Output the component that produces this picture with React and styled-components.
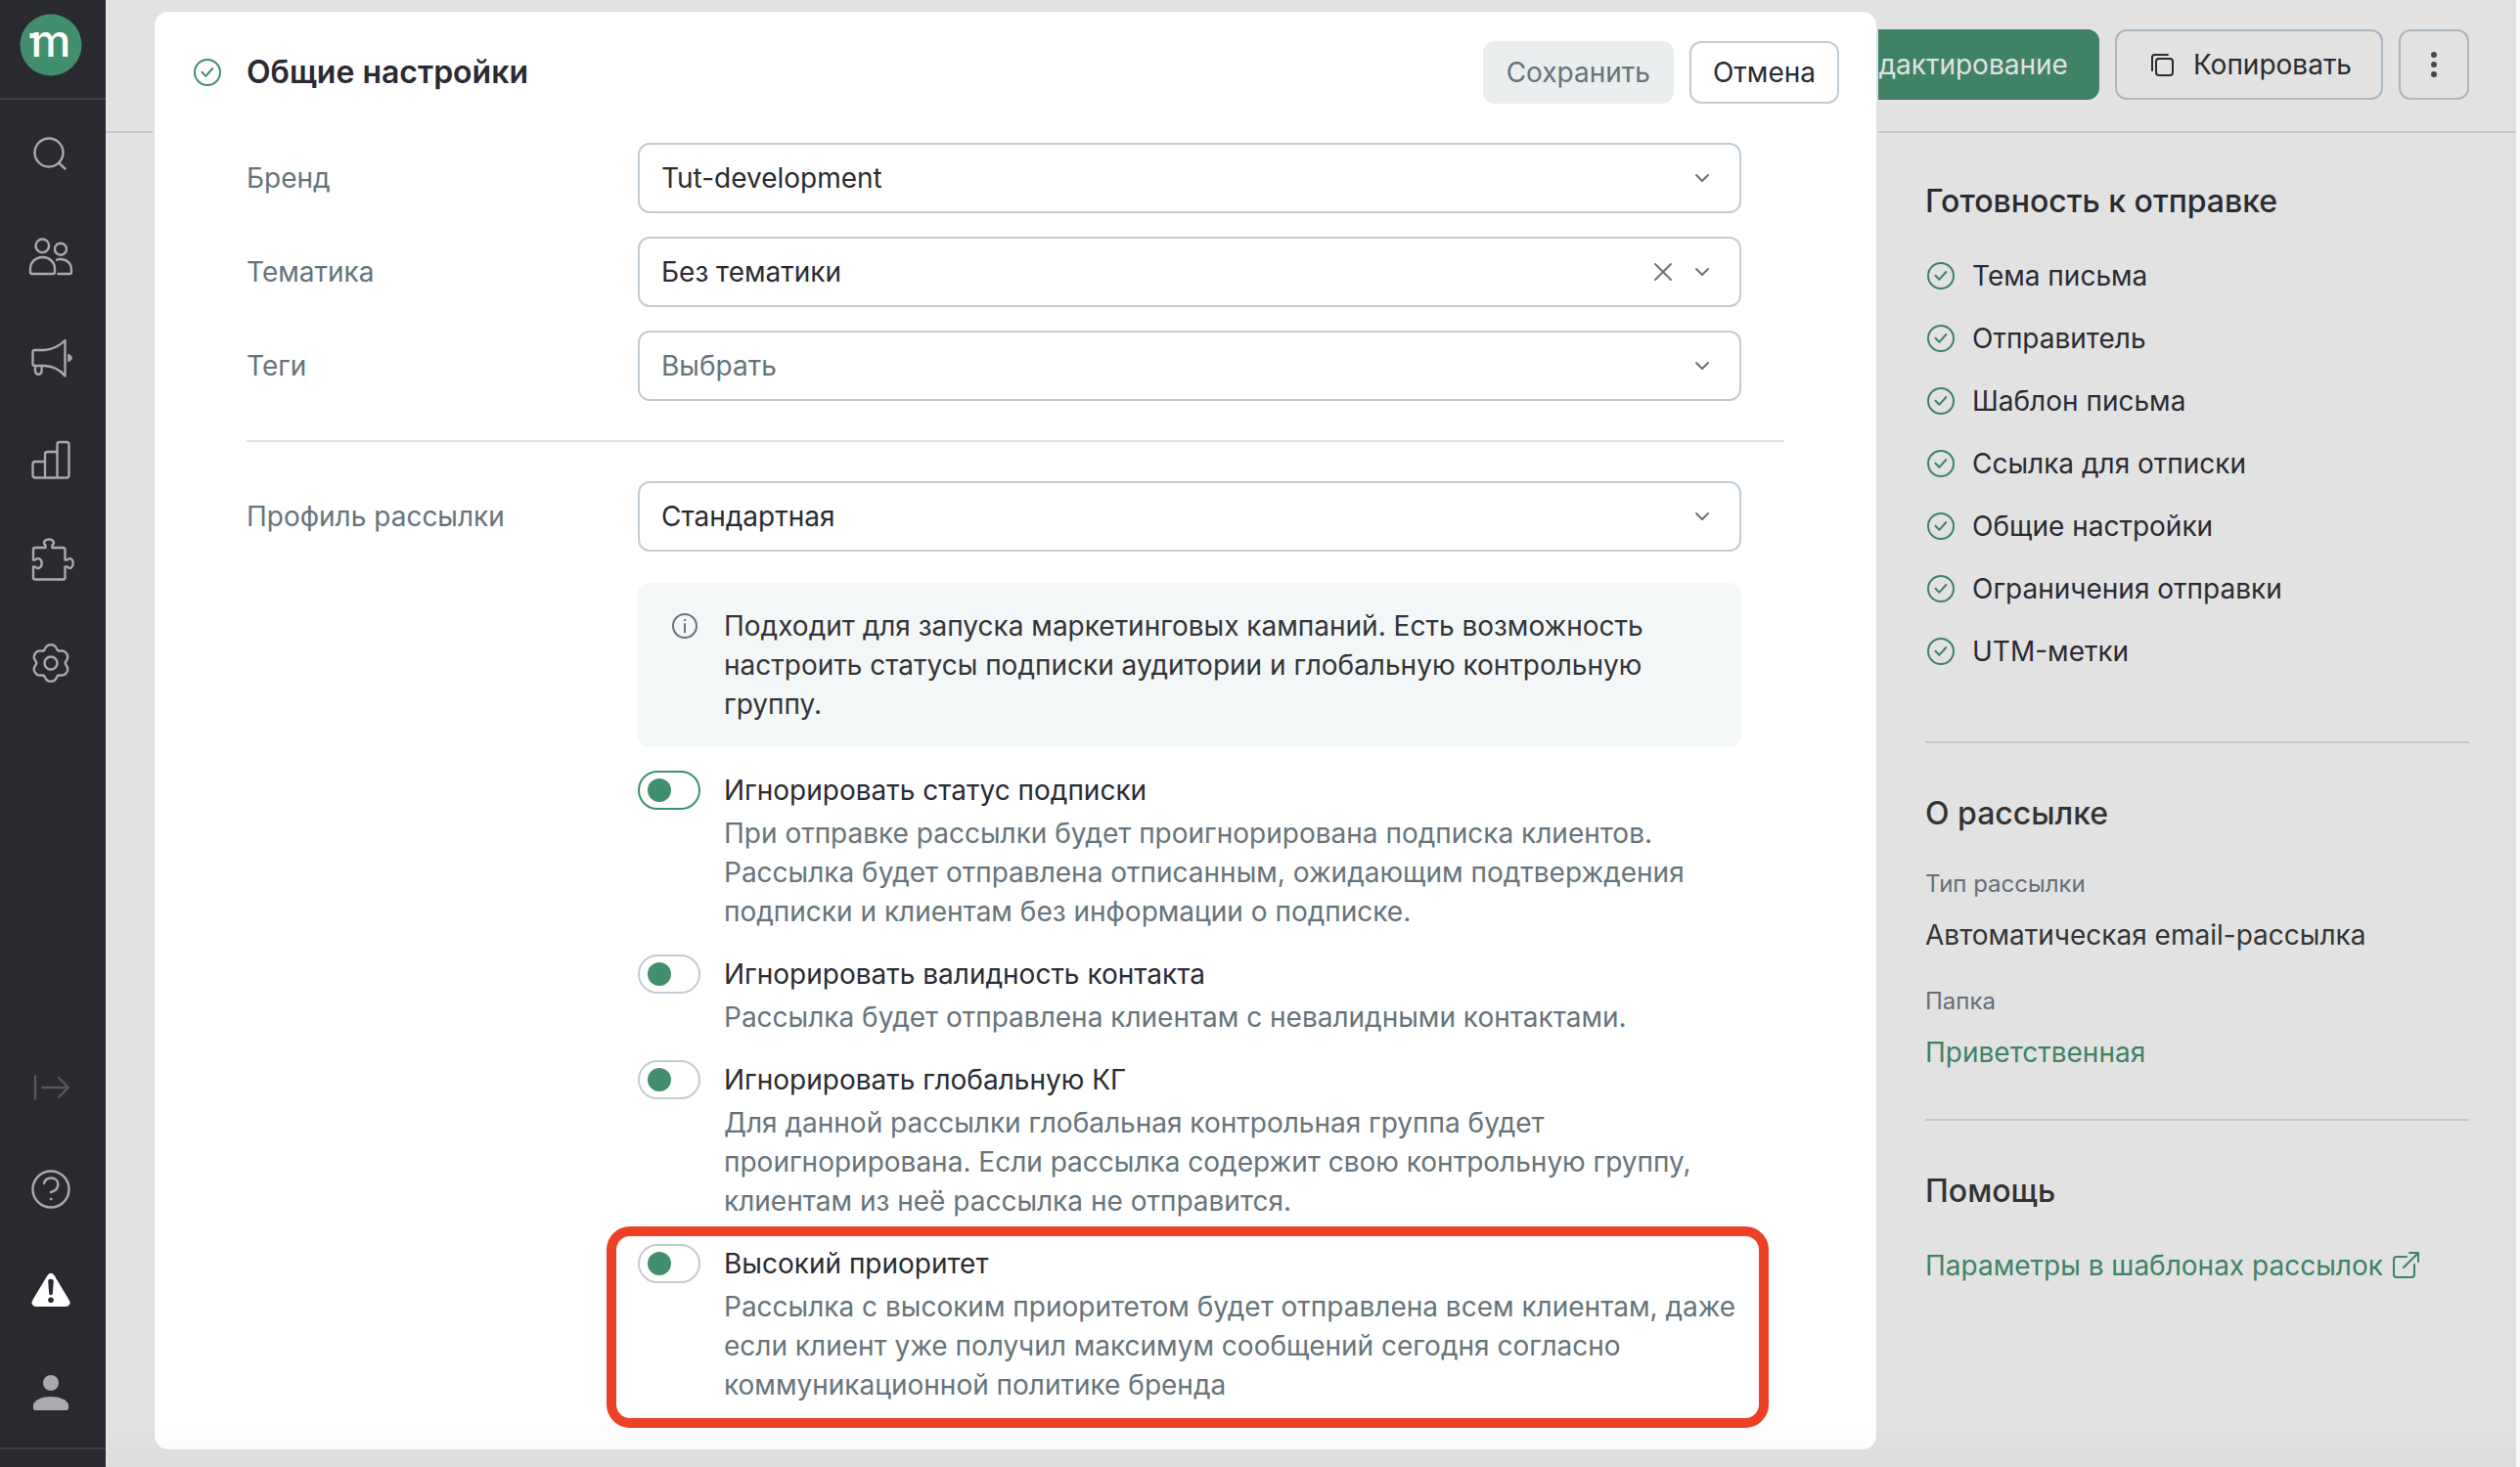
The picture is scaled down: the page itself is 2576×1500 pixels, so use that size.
import React from "react";
import styled, { createGlobalStyle, css } from "styled-components";

const color = {
  ink: "#2a2b32",
  text: "#333435",
  muted: "#66747a",
  mutedDim: "#656e75",
  line: "#dbe3e6",
  control: "#c0ccd5",
  controlDim: "#aab6c0",
  lineDim: "#c3c8cf",
  green: "#418f6e",
  greenDim: "#3f8266",
  page: "#e2e2e2",
  nav: "#292a2f",
};

const GlobalStyle = createGlobalStyle`
  *, *::before, *::after { box-sizing: border-box; }
  body {
    margin: 0;
    background: #f7f8f9;
    color: ${color.ink};
    font: 400 28px/40px Inter, "Liberation Sans", sans-serif;
  }
  button, select, input { font: inherit; color: inherit; margin: 0; }
  h1, h2, p, ul, dl, dd { margin: 0; padding: 0; }
`;

/* ---------- layout ---------- */

const Shell = styled.div`
  display: grid;
  grid-template-columns: 108px minmax(0, 1fr);
  min-height: 100vh;
  padding-right: 4px;
`;

const Sidebar = styled.nav`
  display: flex;
  flex-direction: column;
  background: ${color.nav};
`;

const LogoLink = styled.a`
  display: flex;
  align-items: center;
  height: 102px;
  padding: 0 0 8px 20px;
  border-bottom: 2px solid #3c3d42;
`;

const NavGroup = styled.div`
  display: flex;
  flex-direction: column;
  padding: 4px 4px 4px 0;
  ${(p) => p.$bottom && css`margin-top: auto;`}
`;

const NavButton = styled.button`
  display: flex;
  align-items: center;
  justify-content: center;
  height: 104px;
  padding: 0;
  border: 0;
  background: none;
  color: ${(p) => p.$tone || "#a9aaac"};
`;

const NavFooter = styled.div`
  height: 20px;
  border-top: 2px solid #3c3d42;
`;

const Main = styled.main`
  position: relative;
  display: flex;
  flex-direction: column;
  background: ${color.page};
`;

const Topbar = styled.header`
  display: flex;
  justify-content: flex-end;
  gap: 16px;
  padding: 30px 48px 32px;
  border-bottom: 2px solid ${color.lineDim};
`;

const Button = styled.button`
  display: flex;
  align-items: center;
  justify-content: center;
  gap: 16px;
  height: ${(p) => (p.$small ? 64 : 72)}px;
  padding: 0 ${(p) => (p.$small ? 22 : 30)}px;
  border: 2px solid ${color.control};
  border-radius: 12px;
  background: none;
  color: ${color.ink};
  ${(p) => p.$dim && css`border-color: ${color.controlDim};`}
  ${(p) => p.$primary && css`
    background: ${color.greenDim};
    border-color: ${color.greenDim};
    color: ${color.page};
  `}
  ${(p) => p.$square && css`width: 72px; padding: 0;`}
  &:disabled {
    background: #eaeeef;
    border-color: #eaeeef;
    color: ${color.muted};
  }
`;

/* ---------- right column ---------- */

const Aside = styled.aside`
  align-self: flex-end;
  width: 556px;
  margin-right: 48px;
`;

const Section = styled.section`
  padding: 46px 0 48px;
  & + & {
    padding-top: 48px;
    border-top: 2px solid ${color.lineDim};
  }
`;

const SectionTitle = styled.h2`
  font-size: 32px;
  line-height: 48px;
  font-weight: 500;
  color: ${(p) => (p.$ink ? color.ink : color.text)};
`;

const CheckList = styled.ul`
  display: grid;
  gap: 24px;
  padding: 32px 0 24px;
  list-style: none;
`;

const CheckItem = styled.li`
  display: flex;
  align-items: center;
  gap: 16px;
  color: ${color.ink};
`;

const Facts = styled.dl`
  padding-top: 28px;
  color: ${color.text};
  dt {
    font-size: 24px;
    line-height: 40px;
    color: ${color.mutedDim};
  }
  dd { padding: 12px 0 28px; }
  dd:last-child { padding-bottom: 0; }
`;

const Link = styled.a`
  display: inline-flex;
  align-items: center;
  gap: 8px;
  color: ${color.greenDim};
  text-decoration: none;
`;

const HelpLink = styled(Link)`
  margin-top: 32px;
`;

/* ---------- dialog ---------- */

const Dialog = styled.section`
  position: absolute;
  top: 10px;
  left: 48px;
  right: 652px;
  min-height: 1474px;
  border: 2px solid ${color.line};
  border-radius: 16px;
  background: #fff;
`;

const DialogHeader = styled.header`
  display: flex;
  align-items: center;
  gap: 16px;
  padding: 30px 38px 0 38px;
`;

const DialogTitle = styled.h1`
  flex: 1;
  padding-left: 8px;
  font-size: 32px;
  line-height: 40px;
  font-weight: 600;
`;

const Form = styled.form`
  padding: 16px 94px 46px;
`;

const FieldSet = styled.div`
  display: grid;
  gap: 24px;
  padding: 24px 44px 40px 0;
  & + & {
    padding: 40px 44px 0 0;
    border-top: 2px solid ${color.line};
  }
`;

const Field = styled.div`
  display: grid;
  grid-template-columns: 400px minmax(0, 1fr);
  align-items: center;
`;

const FieldLabel = styled.label`
  color: ${color.muted};
`;

const SelectBox = styled.div`
  position: relative;
  display: grid;
`;

const Select = styled.select`
  appearance: none;
  height: 72px;
  padding: 0 112px 0 22px;
  border: 2px solid ${color.control};
  border-radius: 12px;
  background: #fff;
  color: ${(p) => (p.$empty ? color.muted : color.ink)};
`;

const SelectIcons = styled.div`
  position: absolute;
  top: 0;
  bottom: 0;
  right: 30px;
  display: flex;
  align-items: center;
  gap: 20px;
  color: ${color.muted};
  pointer-events: none;
`;

const ClearButton = styled.button`
  display: flex;
  padding: 0;
  border: 0;
  background: none;
  color: inherit;
  pointer-events: auto;
`;

const Details = styled.div`
  display: grid;
  gap: 24px;
  margin-left: 400px;
`;

const Note = styled.div`
  display: flex;
  gap: 24px;
  margin-top: 8px;
  padding: 24px 32px;
  border-radius: 12px;
  background: #f4f7f8;
  color: ${color.text};
  svg { flex: none; margin-top: 4px; color: ${color.muted}; }
`;

const Option = styled.div`
  position: relative;
  display: grid;
  grid-template-columns: 64px minmax(0, 1fr);
  gap: 4px 24px;
`;

const Toggle = styled.input`
  appearance: none;
  display: flex;
  align-items: center;
  width: 64px;
  height: 40px;
  padding: 0 8px;
  border: 2px solid ${(p) => (p.$active ? color.green : color.control)};
  border-radius: 20px;
  background: #fff;
  &::before {
    content: "";
    width: 24px;
    height: 24px;
    border-radius: 50%;
    background: ${color.green};
  }
  &:checked { justify-content: flex-end; }
`;

const OptionText = styled.p`
  grid-column: 2;
  color: ${color.muted};
`;

const Highlight = styled.div`
  position: absolute;
  inset: -18px -28px -24px -32px;
  border: 10px solid #ec4126;
  border-radius: 24px;
  pointer-events: none;
`;

const BottomShade = styled.div`
  position: absolute;
  left: 0;
  right: 0;
  bottom: 0;
  height: 48px;
  background: linear-gradient(rgba(0, 0, 0, 0), rgba(0, 0, 0, 0.025));
  pointer-events: none;
`;

/* ---------- icons ---------- */

const Icon = ({ size = 48, width = 2, children }) => (
  <svg
    width={size}
    height={size}
    viewBox={`0 0 ${size} ${size}`}
    fill="none"
    stroke="currentColor"
    strokeWidth={width}
    strokeLinecap="round"
    strokeLinejoin="round"
    aria-hidden="true"
  >
    {children}
  </svg>
);

const gearPath = (() => {
  const points = [];
  for (let i = 0; i < 120; i += 1) {
    const a = (i / 120) * Math.PI * 2;
    const r = 17.1 + 2 * Math.cos(6 * a) - 0.4 * Math.cos(12 * a);
    points.push(`${(24 + r * Math.sin(a)).toFixed(2)} ${(24 - r * Math.cos(a)).toFixed(2)}`);
  }
  return `M${points.join("L")}Z`;
})();

const Logo = () => (
  <svg width="64" height="64" viewBox="0 0 64 64" role="img" aria-label="m">
    <circle cx="32" cy="32" r="31.5" fill={color.green} />
    <rect x="10.5" y="20" width="6" height="5" fill="#fff" />
    <text x="11.5" y="44" fill="#fff" fontFamily="Inter, sans-serif" fontSize="46" fontWeight="500">m</text>
  </svg>
);

const navIcons = {
  search: (
    <>
      <circle cx="22" cy="22" r="14.5" />
      <path d="M32 32.5 38.5 38.5" />
    </>
  ),
  people: (
    <>
      <circle cx="15.3" cy="13.3" r="6.8" />
      <path d="M5 42H26a2 2 0 0 0 2-2V37C28 30 22.5 25 15.5 25S3 30 3 37v3a2 2 0 0 0 2 2Z" />
      <circle cx="34" cy="16.7" r="6" />
      <path d="M31.5 42H43a2 2 0 0 0 2-2V38C45 31 40 27 33.5 27 32.3 27 31 27.3 30 27.8" />
    </>
  ),
  megaphone: (
    <>
      <path d="M7.5 16H17C26 15.5 34 10.5 38.5 6V42.5C34 37 26 32 17 32H7.5A2 2 0 0 1 5.5 30V18A2 2 0 0 1 7.5 16Z" />
      <path d="M8 32V37.5a3.3 3.3 0 0 0 6.6 0V32" />
      <path d="M42 20.5C46.5 21 46.5 27 42 27.5Z" fill="currentColor" strokeWidth="1" />
    </>
  ),
  chart: (
    <>
      <path d="M18 26H8a2.500 2.500 0 0 0-2.500 2.500V40A2.500 2.500 0 0 0 8 42.500H40A2.500 2.500 0 0 0 42.500 40V8.500A2.500 2.500 0 0 0 40 6H33A2.500 2.500 0 0 0 30.500 8.500V42" />
      <path d="M18 42V18.500A2.500 2.500 0 0 1 20.500 16H30" />
    </>
  ),
  puzzle: (
    <path d="M8 10H18.5V7.5C15.5 5 17.5 1.5 22 1.5S28.5 5 25.5 7.5V10H36.5A2 2 0 0 1 38.5 12V22.5H41C43.5 19.5 46.7 21.5 46.7 26S43.5 32.5 41 29.5H38.5V40.5A2 2 0 0 1 36.5 42.5H8A2 2 0 0 1 6 40.5V29.5H8C10.5 32.5 14.7 30.5 14.7 26S10.5 19.5 8 22.5H6V12A2 2 0 0 1 8 10Z" />
  ),
  settings: (
    <>
      <path d={gearPath} />
      <circle cx="24" cy="24" r="6.5" />
    </>
  ),
  expand: <path d="M8 12.5V35.5M15.5 24H42M32 14 42 24 32 34" />,
  help: (
    <>
      <circle cx="24" cy="24" r="18.5" />
      <path d="M17 18C18 14.5 20.5 12.5 24 12.5 28 12.5 31.3 15 31.3 19 31.3 23.5 28 26 24 27" />
      <circle cx="24" cy="34" r="1" fill="currentColor" strokeWidth="1" />
    </>
  ),
  warning: (
    <>
      <path d="M21 8C22.5 5.7 25.5 5.7 27 8L42.5 34C44 36.5 42.5 39.5 39.5 39.5H8.5C5.5 39.5 4 36.5 5.5 34Z" fill="currentColor" strokeWidth="1" />
      <path d="M21.2 14C21.2 11 26.8 11 26.8 14L25.8 27C25.7 28.5 22.3 28.5 22.2 27Z" fill={color.nav} stroke="none" />
      <circle cx="24" cy="33.3" r="2.8" fill={color.nav} stroke="none" />
    </>
  ),
  user: (
    <>
      <circle cx="24" cy="14" r="8" fill="currentColor" stroke="none" />
      <path d="M6 40V36C8 31 15 28 24 28S40 31 42 36V40A2 2 0 0 1 40 42H8A2 2 0 0 1 6 40Z" fill="currentColor" stroke="none" />
    </>
  ),
};

const CheckIcon = () => (
  <Icon size={32}>
    <circle cx="16" cy="16" r="13" />
    <path d="M10.5 15.8 14.3 19.8 21.3 12" />
  </Icon>
);

const GreenCheck = styled.span`
  display: flex;
  color: ${(p) => (p.$dim ? color.greenDim : color.green)};
`;

const Chevron = () => (
  <Icon size={20}>
    <path d="M4 7 10 13 16 7" />
  </Icon>
);

const Cross = () => (
  <Icon size={20}>
    <path d="M2 2 18 18M18 2 2 18" />
  </Icon>
);

const InfoIcon = () => (
  <Icon size={32}>
    <circle cx="16" cy="16" r="12" />
    <path d="M16 14V22.5" />
    <circle cx="16" cy="10" r=".7" fill="currentColor" strokeWidth="1" />
  </Icon>
);

const CopyIcon = () => (
  <Icon size={32}>
    <rect x="10" y="10" width="17" height="17" rx="3" />
    <path d="M6 22V8.5A2.5 2.5 0 0 1 8.5 6H22" />
  </Icon>
);

const MoreIcon = () => (
  <Icon size={32}>
    <g fill="#45464b" stroke="none">
      <circle cx="16" cy="6" r="3" />
      <circle cx="16" cy="16" r="3" />
      <circle cx="16" cy="26" r="3" />
    </g>
  </Icon>
);

const ExternalIcon = () => (
  <Icon size={32}>
    <path d="M16 7H6A3 3 0 0 0 3 10V25A3 3 0 0 0 6 28H21A3 3 0 0 0 24 25V15M19 3H28V12M28 3 13 18" />
  </Icon>
);

/* ---------- content ---------- */

const topNav = [
  ["search", "Поиск"],
  ["people", "Клиенты"],
  ["megaphone", "Кампании"],
  ["chart", "Отчёты"],
  ["puzzle", "Интеграции"],
  ["settings", "Настройки"],
];

const bottomNav = [
  ["expand", "Развернуть", "#56575b"],
  ["help", "Справка"],
  ["warning", "Предупреждения", "#ffffff"],
  ["user", "Профиль"],
];

const checks = [
  "Тема письма",
  "Отправитель",
  "Шаблон письма",
  "Ссылка для отписки",
  "Общие настройки",
  "Ограничения отправки",
  "UTM-метки",
];

const options = [
  {
    id: "ignore-status",
    title: "Игнорировать статус подписки",
    text: "При отправке рассылки будет проигнорирована подписка клиентов. Рассылка будет отправлена отписанным, ожидающим подтверждения подписки и клиентам без информации о подписке.",
    active: true,
  },
  {
    id: "ignore-validity",
    title: "Игнорировать валидность контакта",
    text: "Рассылка будет отправлена клиентам с невалидными контактами.",
  },
  {
    id: "ignore-control",
    title: "Игнорировать глобальную КГ",
    text: "Для данной рассылки глобальная контрольная группа будет проигнорирована. Если рассылка содержит свою контрольную группу, клиентам из неё рассылка не отправится.",
  },
  {
    id: "high-priority",
    title: "Высокий приоритет",
    text: "Рассылка с высоким приоритетом будет отправлена всем клиентам, даже если клиент уже получил максимум сообщений сегодня согласно коммуникационной политике бренда",
    highlighted: true,
  },
];

const NavItems = ({ items }) =>
  items.map(([icon, label, tone]) => (
    <NavButton key={icon} type="button" aria-label={label} $tone={tone}>
      <Icon width={2.4}>{navIcons[icon]}</Icon>
    </NavButton>
  ));

const SelectField = ({ id, label, value, empty, clearable }) => (
  <Field>
    <FieldLabel htmlFor={id}>{label}</FieldLabel>
    <SelectBox>
      <Select id={id} defaultValue={value} $empty={empty}>
        <option>{value}</option>
      </Select>
      <SelectIcons>
        {clearable && (
          <ClearButton type="button" aria-label="Очистить">
            <Cross />
          </ClearButton>
        )}
        <Chevron />
      </SelectIcons>
    </SelectBox>
  </Field>
);

export default function App() {
  return (
    <>
      <GlobalStyle />
      <Shell>
        <Sidebar>
          <LogoLink href="#">
            <Logo />
          </LogoLink>
          <NavGroup>
            <NavItems items={topNav} />
          </NavGroup>
          <NavGroup $bottom>
            <NavItems items={bottomNav} />
          </NavGroup>
          <NavFooter />
        </Sidebar>

        <Main>
          <Topbar>
            <Button type="button" $primary>Редактирование</Button>
            <Button type="button" $dim>
              <CopyIcon />
              Копировать
            </Button>
            <Button type="button" $dim $square aria-label="Ещё">
              <MoreIcon />
            </Button>
          </Topbar>

          <Aside>
            <Section>
              <SectionTitle $ink>Готовность к отправке</SectionTitle>
              <CheckList>
                {checks.map((name) => (
                  <CheckItem key={name}>
                    <GreenCheck $dim><CheckIcon /></GreenCheck>
                    {name}
                  </CheckItem>
                ))}
              </CheckList>
            </Section>
            <Section>
              <SectionTitle>О рассылке</SectionTitle>
              <Facts>
                <dt>Тип рассылки</dt>
                <dd>Автоматическая email-рассылка</dd>
                <dt>Папка</dt>
                <dd><Link href="#">Приветственная</Link></dd>
              </Facts>
            </Section>
            <Section>
              <SectionTitle>Помощь</SectionTitle>
              <HelpLink href="#">
                Параметры в шаблонах рассылок
                <ExternalIcon />
              </HelpLink>
            </Section>
          </Aside>

          <Dialog role="dialog" aria-labelledby="dialog-title">
            <DialogHeader>
              <GreenCheck><CheckIcon /></GreenCheck>
              <DialogTitle id="dialog-title">Общие настройки</DialogTitle>
              <Button type="button" $small disabled>Сохранить</Button>
              <Button type="button" $small>Отмена</Button>
            </DialogHeader>
            <Form>
              <FieldSet>
                <SelectField id="brand" label="Бренд" value="Tut-development" />
                <SelectField id="topic" label="Тематика" value="Без тематики" clearable />
                <SelectField id="tags" label="Теги" value="Выбрать" empty />
              </FieldSet>
              <FieldSet>
                <SelectField id="profile" label="Профиль рассылки" value="Стандартная" />
                <Details>
                  <Note>
                    <InfoIcon />
                    <p>
                      Подходит для запуска маркетинговых кампаний. Есть возможность настроить
                      статусы подписки аудитории и глобальную контрольную группу.
                    </p>
                  </Note>
                  {options.map((option) => (
                    <Option key={option.id}>
                      <Toggle id={option.id} type="checkbox" $active={option.active} />
                      <label htmlFor={option.id}>{option.title}</label>
                      <OptionText>{option.text}</OptionText>
                      {option.highlighted && <Highlight />}
                    </Option>
                  ))}
                </Details>
              </FieldSet>
            </Form>
          </Dialog>
          <BottomShade />
        </Main>
      </Shell>
    </>
  );
}
